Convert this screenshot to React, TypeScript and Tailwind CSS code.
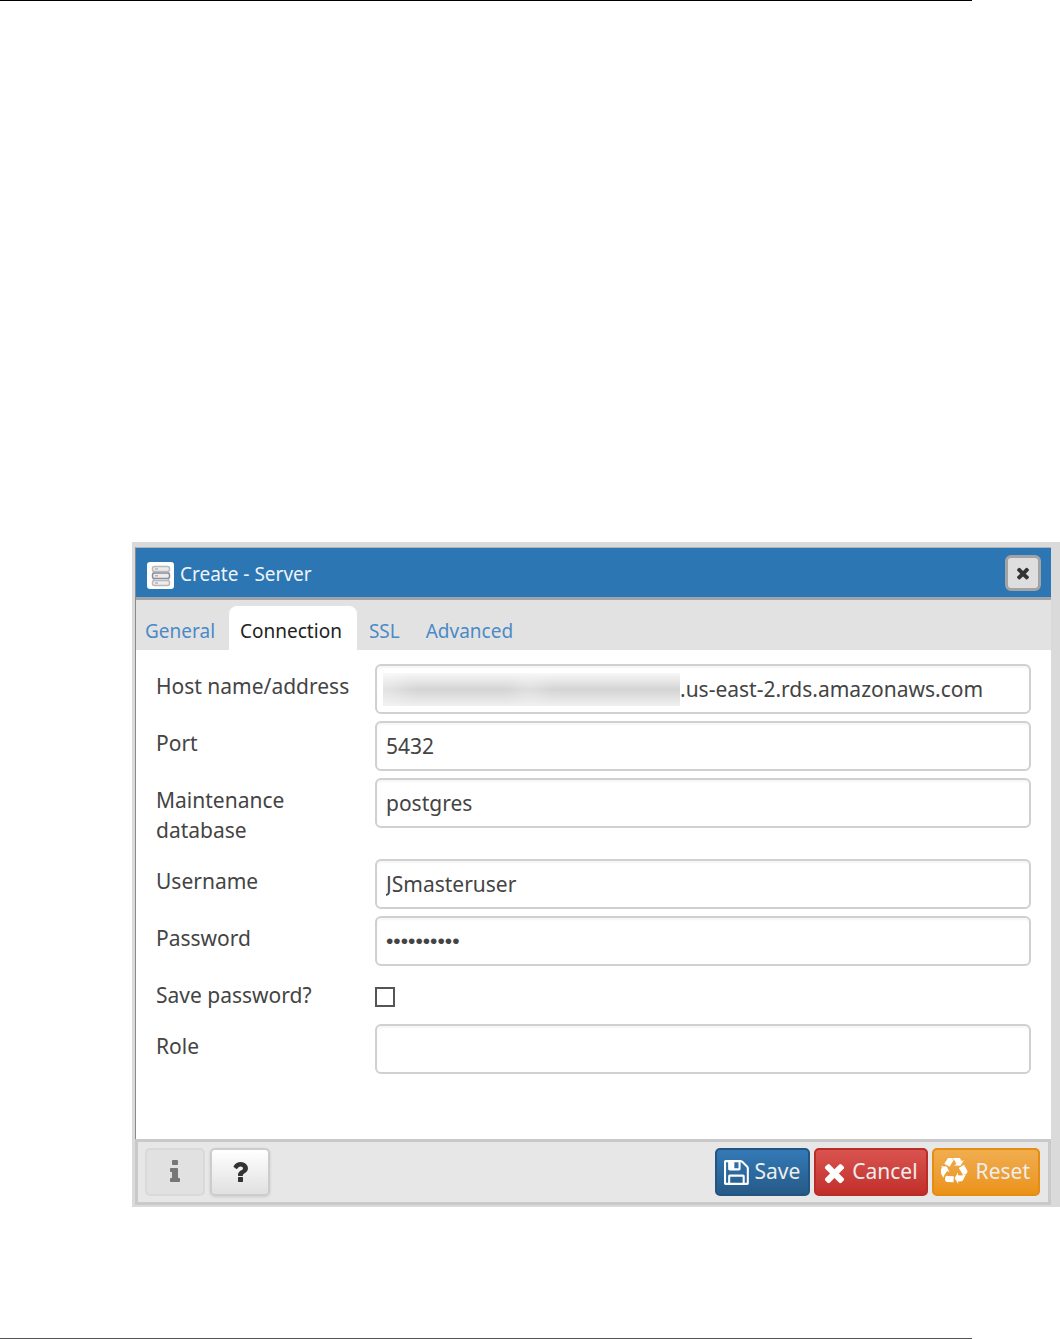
import { useState, type ReactNode } from "react";
import clsx from "clsx";

const ICONS = {
  save: "M384 1536h768v-384h-768v384zm896 0h128v-896q0-14-10-38.5t-20-34.5l-281-281q-10-10-34-20t-39-10v416q0 40-28 68t-68 28h-576q-40 0-68-28t-28-68v-416h-128v1280h128v-416q0-40 28-68t68-28h832q40 0 68 28t28 68v416zm-384-928v-320q0-13-9.5-22.5t-22.5-9.5h-192q-13 0-22.5 9.5t-9.5 22.5v320q0 13 9.5 22.5t22.5 9.5h192q13 0 22.5-9.5t9.5-22.5zm640 32v928q0 40-28 68t-68 28h-1344q-40 0-68-28t-28-68v-1344q0-40 28-68t68-28h928q40 0 88 20t76 48l280 280q28 28 48 76t20 88z",
  times: "M1490 1322q0 40-28 68l-136 136q-28 28-68 28t-68-28l-294-294-294 294q-28 28-68 28t-68-28l-136-136q-28-28-28-68t28-68l294-294-294-294q-28-28-28-68t28-68l136-136q28-28 68-28t68 28l294 294 294-294q28-28 68-28t68 28l136 136q28 28 28 68t-28 68l-294 294 294 294q28 28 28 68z",
  recycle: "M820 1169l-15 368-2 22-420-29q-36-3-67-31.5t-47-65.5q-11-27-14.5-55t4-65 12-55 21.5-64 19-53q78 12 509 28zm-453-630l180 379-147-92q-63 72-111.5 144.5t-72.5 125-39.5 94.5-18.5 63l-4 21-190-357q-17-26-18-56t6-47l8-18q35-63 114-188l-140-86zm1231 517l-188 359q-12 29-36.5 46.5t-43.5 20.5l-18 4q-71 7-219 12l8 164-230-367 211-362 7 173q170 16 283 5t170-33zm-785-924q-47 63-265 435l-317-187-19-12 225-356q20-31 60-45t80-10q24 2 48.5 12t42 21 41.5 33 36 34.5 36 39.5 32 35zm655 307l212 363q18 37 12.5 76t-27.5 74q-13 20-33 37t-38 28-48.5 22-47 16-51.5 14-46 12q-34-72-265-436l313-195zm-143-226l142-83-220 373-419-20 151-86q-34-89-75-166t-75.5-123.5-64.5-80-47-46.5l-17-13 405 1q31-3 58 10.5t39 28.5l11 15q39 56 112 192z",
  info: "M1216 1344v128q0 26-19 45t-45 19h-512q-26 0-45-19t-19-45v-128q0-26 19-45t45-19h64v-384h-64q-26 0-45-19t-19-45v-128q0-26 19-45t45-19h384q26 0 45 19t19 45v576h64q26 0 45 19t19 45zm-128-1152v192q0 26-19 45t-45 19h-256q-26 0-45-19t-19-45v-192q0-26 19-45t45-19h256q26 0 45 19t19 45z",
  question: "M1088 1256v240q0 16-12 28t-28 12h-240q-16 0-28-12t-12-28v-240q0-16 12-28t28-12h240q16 0 28 12t12 28zm316-600q0 54-15.5 101t-35 76.5-55 59.5-57.5 43.5-61 35.5q-41 23-68.5 65t-27.5 67q0 17-12 32.5t-28 15.5h-240q-15 0-25.5-18.5t-10.5-37.5v-45q0-83 65-156.5t143-108.5q59-27 84-56t25-76q0-42-46.5-74t-107.5-32q-65 0-108 29-35 25-107 115-13 16-31 16-12 0-25-8l-164-125q-13-10-15.5-25t5.5-28q160-266 464-266 80 0 161 31t146 83 106 127.5 41 158.5z",
};

const Icon = ({ name, className }: { name: keyof typeof ICONS; className?: string }) => (
  <svg viewBox="0 0 1792 1792" fill="currentColor" aria-hidden="true" className={className}>
    <path d={ICONS[name]} />
  </svg>
);

const ServerIcon = () => (
  <svg viewBox="0 0 27 27" className="mt-[5px] size-[27px]" aria-hidden="true">
    <rect width="27" height="27" rx="3" fill="#fff" />
    <g fill="#ececec" strokeWidth="1.5">
      <rect x="5.5" y="4.5" width="17" height="5" rx="2" stroke="#b9b9bb" />
      <rect x="5.5" y="18.5" width="17" height="5" rx="2" stroke="#b9b9bb" />
      <path d="M6.5 9.5v2M21.5 9.5v2M6.5 16.5v2M21.5 16.5v2" stroke="#b9b9bb" />
      <rect x="5.5" y="11" width="17" height="5.5" rx="2" stroke="#8d8b9c" />
      <path d="M8 7h3M8 13.7h3M8 21h3" stroke="#b4b4ba" />
    </g>
  </svg>
);

const TABS = ["General", "Connection", "SSL", "Advanced"];

const boxClass =
  "flex-1 min-w-0 h-[50px] rounded-[6px] border-2 border-[#d0d0d0] bg-white shadow-[inset_0_2px_2px_rgba(0,0,0,0.04)]";

const FieldRow = ({ id, label, children }: { id: string; label: string; children: ReactNode }) => (
  <div className="flex items-start">
    <label htmlFor={id} className="w-[219px] shrink-0 py-[7px] pr-4 leading-[30px]">
      {label}
    </label>
    {children}
  </div>
);

const TextField = ({ id, label, value, type = "text" }: { id: string; label: string; value: string; type?: string }) => (
  <FieldRow id={id} label={label}>
    <input
      id={id}
      type={type}
      defaultValue={value}
      className={clsx(boxClass, "px-[9px]", type === "password" && "font-['Liberation_Sans',sans-serif]")}
    />
  </FieldRow>
);

const buttonClass = "flex h-12 items-center rounded-[5px] border-2";

const App = () => {
  const [tab, setTab] = useState("Connection");

  return (
    <main className="bg-white font-['Noto_Sans','Open_Sans',sans-serif] text-[21px] text-[#444]">
      <hr className="mr-[88px] border-t border-black" />

      <section
        role="dialog"
        aria-label="Create - Server"
        className="mt-[541px] ml-[132px] bg-[#dadada] pt-[5px] pr-[9px] pb-[2px] pl-[3px]"
      >
        <div className="border-t border-l border-t-[#a9b4bd] border-l-[#8a8a8a] bg-white">
          <header className="flex h-[52px] items-center justify-between border-b-3 border-[#a0a4a8] bg-[#2c76b4] pr-[10px] pl-[11px]">
            <div className="flex items-center gap-[6px]">
              <ServerIcon />
              <h1 className="pt-1 text-[19px] text-[#eef4fa]">Create - Server</h1>
            </div>
            <button
              type="button"
              aria-label="Close"
              className="flex size-9 items-center justify-center rounded-[6px] border-3 border-[#a3a3a3] bg-[#dedede] text-[#333]"
            >
              <Icon name="times" className="size-[18px]" />
            </button>
          </header>

          <nav role="tablist" className="flex h-[50px] items-end bg-[#e2e2e2] text-[19px]">
            {TABS.map((name) => (
              <button
                key={name}
                type="button"
                role="tab"
                aria-selected={tab === name}
                onClick={() => setTab(name)}
                className={clsx(
                  "h-[44px] rounded-t-[8px] pt-[7px] pl-[11px] first:pl-[9px] last:ml-1",
                  tab === name ? "mr-px ml-[3px] bg-white pr-[15px] text-[#222]" : "pr-[11px] text-[#4a8ac6]"
                )}
              >
                {name}
              </button>
            ))}
          </nav>

          <form className="flex flex-col gap-[7px] pt-[14px] pr-5 pb-[65px] pl-5">
            <FieldRow id="host" label="Host name/address">
              <div className={clsx(boxClass, "flex items-center pl-[6px]")}>
                <span className="relative h-[33px] w-[297px] shrink-0 overflow-hidden bg-linear-to-b from-[#f8f8f8] via-[#d4d4d4] to-[#f0f0f0]">
                  <span className="absolute top-0 left-[134px] h-8 w-6 bg-white/30 blur-[10px]" />
                  <span className="absolute top-0 -left-4 h-8 w-8 bg-white/50 blur-[12px]" />
                </span>
                <input
                  id="host"
                  defaultValue=".us-east-2.rds.amazonaws.com"
                  className="h-full min-w-0 flex-1 bg-transparent"
                />
              </div>
            </FieldRow>
            <TextField id="port" label="Port" value="5432" />
            <TextField id="database" label="Maintenance database" value="postgres" />
            <TextField id="username" label="Username" value="JSmasteruser" />
            <TextField id="password" label="Password" type="password" value="masterpass" />
            <FieldRow id="save-password" label="Save password?">
              <input
                id="save-password"
                type="checkbox"
                className="mt-[14px] size-5 appearance-none border-2 border-[#555] bg-white checked:bg-[#555]"
              />
            </FieldRow>
            <TextField id="role" label="Role" value="" />
          </form>
        </div>

        <footer className="flex h-[66px] items-center justify-between border-3 border-[#c9c9c9] bg-[#e7e7e7] pr-2 pl-[7px]">
          <div className="flex gap-[5px]">
            <button
              type="button"
              disabled
              aria-label="Info"
              className={clsx(buttonClass, "w-[60px] justify-center border-[#d9d9d9] bg-[#e1e1e1]")}
            >
              <Icon name="info" className="size-7 text-[#777]" />
            </button>
            <button
              type="button"
              aria-label="Help"
              className={clsx(
                buttonClass,
                "w-[60px] justify-center border-[#ccc] bg-linear-to-b from-white to-[#e0e0e0] shadow-[0_1px_3px_rgba(0,0,0,0.12)]"
              )}
            >
              <Icon name="question" className="size-7 text-[#333]" />
            </button>
          </div>
          <div className="flex gap-1 text-[#eee]">
            <button
              type="button"
              className={clsx(buttonClass, "gap-px border-[#245580] bg-linear-to-b from-[#337ab7] to-[#265a88] pr-2 pl-[7px]")}
            >
              <Icon name="save" className="size-[29px] text-white" />
              Save
            </button>
            <button
              type="button"
              className={clsx(buttonClass, "gap-[3px] border-[#b92c28] bg-linear-to-b from-[#d9534f] to-[#c12e2a] pr-2 pl-1")}
            >
              <Icon name="times" className="size-[29px] text-white" />
              Cancel
            </button>
            <button
              type="button"
              className={clsx(buttonClass, "gap-[7px] border-[#e38d13] bg-linear-to-b from-[#f0ad4e] to-[#eb9316] pr-2 pl-[7px]")}
            >
              <Icon name="recycle" className="size-7 text-white" />
              Reset
            </button>
          </div>
        </footer>
      </section>

      <hr className="mt-[131px] mr-[88px] border-t border-[#555]" />
    </main>
  );
};

export default App;
